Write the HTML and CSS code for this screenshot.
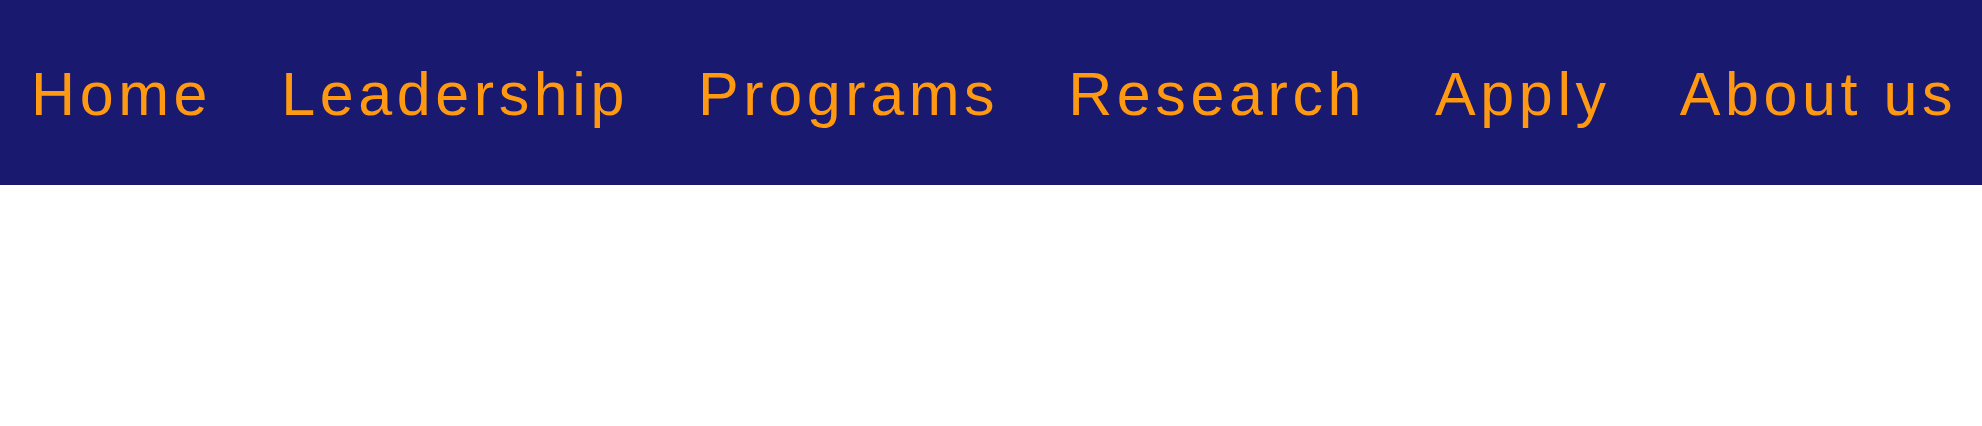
FILE: index.html
```html
<!DOCTYPE html>
<html lang="en">
<head>
<meta charset="utf-8">
<title>Nav</title>
<link rel="stylesheet" href="styles.css">
</head>
<body>
<nav class="topnav">
  <ul class="menu">
    <li class="item"><a class="link" href="#">Home</a></li>
    <li class="item"><a class="link" href="#">Leadership</a></li>
    <li class="item"><a class="link" href="#">Programs</a></li>
    <li class="item"><a class="link" href="#">Research</a></li>
    <li class="item"><a class="link" href="#">Apply</a></li>
    <li class="item"><a class="link" href="#">About us</a></li>
  </ul>
</nav>
</body>
</html>
```
FILE: styles.css
```css
html, body {
  margin: 0;
  padding: 0;
  background: #ffffff;
}

.topnav {
  background: #191970;
  height: 185px;
  box-sizing: border-box;
  padding: 60px 0 0 31px;
  overflow: hidden;
}

.menu {
  list-style: none;
  margin: 0;
  padding: 0;
  display: flex;
  gap: 69px;
  white-space: nowrap;
}

.item {
  margin: 0;
  padding: 0;
}

.link {
  font-family: "Liberation Sans", Arial, sans-serif;
  font-size: 61px;
  line-height: 69px;
  letter-spacing: 4.6px;
  color: #ff9912;
  text-decoration: none;
}
```
